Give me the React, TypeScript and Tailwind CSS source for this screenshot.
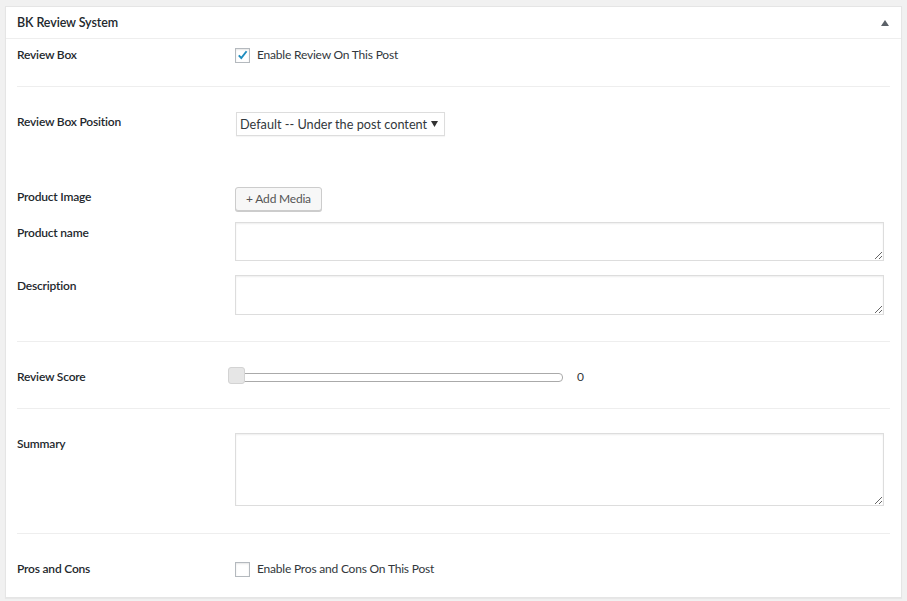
import React from "react";

const font = { fontFamily: "Lato, 'Noto Sans', sans-serif" };

function Checkbox({ checked }: { checked?: boolean }) {
  return (
    <div className="w-[15px] h-[15px] border border-[#b4b9be] bg-white shadow-[inset_0_1px_2px_rgba(0,0,0,0.1)] flex items-center justify-center shrink-0">
      {checked && (
        <svg width="15" height="15" viewBox="0 0 15 15" className="block">
          <path d="M3.2 7.4 L6.1 10.4 L12.2 2.6" fill="none" stroke="#1e8cbe" strokeWidth="2.2" />
        </svg>
      )}
    </div>
  );
}

function Label({ children, mt }: { children: React.ReactNode; mt: string }) {
  return (
    <div className={`w-[218px] shrink-0 text-[12px] tracking-[-0.2px] leading-[18px] font-semibold text-[#23282d] ${mt}`}>{children}</div>
  );
}

function TextArea({ h }: { h: string }) {
  return (
    <textarea
      className={`block w-[649px] ${h} border border-[#ddd] bg-white shadow-[inset_0_1px_2px_rgba(0,0,0,0.07)] outline-none`}
    />
  );
}

export default function App() {
  return (
    <div className="w-[907px] h-[601px] bg-[#f1f1f1] pt-[6px] pl-[5px]" style={font}>
      <div className="w-[897px] h-[592px] border border-[#e5e5e5] bg-white shadow-[0_1px_1px_rgba(0,0,0,0.04)]">
        <div className="h-[32px] border-b border-[#eee] flex items-center justify-between pl-[11px] pr-[12px]">
          <div className="text-[12.5px] tracking-[-0.1px] font-semibold text-[#23282d] leading-[18px] mt-[1px]">BK Review System</div>
          <svg width="8" height="6" viewBox="0 0 8 6" className="block mt-[1px]">
            <path d="M0 6 L4 0 L8 6 Z" fill="#5b6168" />
          </svg>
        </div>
        <div className="px-[11px]">
          {/* Section 1 */}
          <div className="h-[48px] border-b border-[#eee] pt-[7px] flex items-start">
            <Label mt="mt-0">Review Box</Label>
            <div className="flex items-center gap-[7px] h-[18px]">
              <Checkbox checked />
              <span className="text-[12px] tracking-[-0.2px] text-[#32373c] leading-[18px]">Enable Review On This Post</span>
            </div>
          </div>
          {/* Section 2 */}
          <div className="h-[255px] border-b border-[#eee] pt-[25px] flex flex-col">
            <div className="flex items-start">
              <Label mt="mt-[1px]">Review Box Position</Label>
              <div className="ml-[1px] w-[209px] h-[24px] border border-[#ddd] bg-white flex items-center justify-between pl-[3px] pr-[6px] shadow-[0_1px_1px_rgba(0,0,0,0.04)]">
                <span className="text-[12.7px] text-[#32373c] leading-[18px] whitespace-nowrap">Default -- Under the post content</span>
                <svg width="7" height="6" viewBox="0 0 7 6" className="block">
                  <path d="M0 0 L7 0 L3.5 6 Z" fill="#333" />
                </svg>
              </div>
            </div>
            <div className="flex items-start mt-[51px]">
              <Label mt="mt-[1px]">Product Image</Label>
              <div className="h-[24px] w-[87px] justify-center border border-[#ccc] rounded-[3px] bg-[#f7f7f7] shadow-[0_1px_0_#ccc] flex items-center text-[12px] tracking-[-0.2px] text-[#555]">
                + Add Media
              </div>
            </div>
            <div className="flex items-start mt-[11px]">
              <Label mt="mt-[2px]">Product name</Label>
              <TextArea h="h-[39px]" />
            </div>
            <div className="flex items-start mt-[14px]">
              <Label mt="mt-[2px]">Description</Label>
              <TextArea h="h-[40px]" />
            </div>
          </div>
          {/* Section 3 */}
          <div className="h-[67px] border-b border-[#eee] pt-[25px] flex items-start">
            <Label mt="mt-[1px]">Review Score</Label>
            <div className="ml-[-7px] flex items-center h-[18px]">
              <div className="relative w-[335px] h-[9px] border border-[#aaa] rounded-[4px] bg-white mt-[3px]">
                <div className="absolute left-[-1px] top-[-7px] w-[17px] h-[17px] border border-[#d3d3d3] rounded-[3px] bg-[#e6e6e6]" />
              </div>
              <span className="ml-[14px] text-[12px] text-[#32373c] leading-[18px] mt-[1px]">0</span>
            </div>
          </div>
          {/* Section 4 */}
          <div className="h-[125px] border-b border-[#eee] pt-[24px] flex items-start">
            <Label mt="mt-[2px]">Summary</Label>
            <TextArea h="h-[73px]" />
          </div>
          {/* Section 5 */}
          <div className="pt-[26px] flex items-start">
            <Label mt="mt-0">Pros and Cons</Label>
            <div className="flex items-center gap-[7px] h-[18px]">
              <Checkbox />
              <span className="text-[12px] tracking-[-0.2px] text-[#32373c] leading-[18px]">Enable Pros and Cons On This Post</span>
            </div>
          </div>
        </div>
      </div>
    </div>
  );
}
